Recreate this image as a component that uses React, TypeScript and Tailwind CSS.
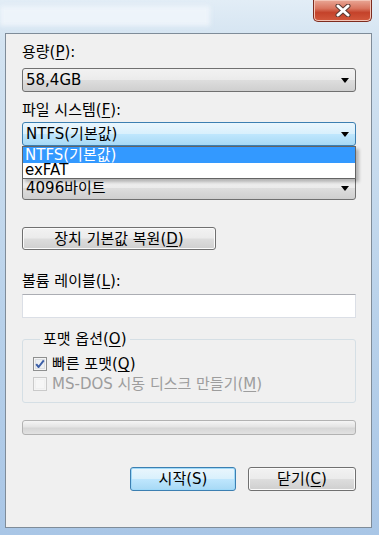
import React from "react";

const U = ({ children }: { children: React.ReactNode }) => (
  <span className="underline underline-offset-[2px] decoration-1">{children}</span>
);

function Arrow() {
  return (
    <svg width="8" height="5" viewBox="0 0 8 5" className="shrink-0">
      <path d="M0 0H8L4 5Z" fill="#000" />
    </svg>
  );
}

function Combo({ value, focused = false }: { value: string; focused?: boolean }) {
  const skin = focused
    ? "border-[#3c7fb1] bg-[linear-gradient(180deg,#eaf6fd_0%,#d9f0fc_48%,#bee6fd_52%,#a7d9f5_100%)]"
    : "border-[#707070] bg-[linear-gradient(180deg,#f2f2f2_0%,#ebebeb_48%,#dddddd_52%,#cfcfcf_100%)]";
  return (
    <div className={`h-[24px] rounded-[3px] border flex items-center justify-between pl-[3px] pr-[6px] ${skin}`}>
      <span className="leading-[18px]">{value}</span>
      <Arrow />
    </div>
  );
}

function Button({ children, primary = false, className = "" }: { children: React.ReactNode; primary?: boolean; className?: string }) {
  const skin = primary
    ? "border-[#3c7fb1] bg-[linear-gradient(180deg,#eaf6fd_0%,#d9f0fc_48%,#bee6fd_52%,#a7d9f5_100%)] shadow-[0_0_0_1px_#9fd9f8_inset]"
    : "border-[#707070] bg-[linear-gradient(180deg,#f2f2f2_0%,#ebebeb_48%,#dddddd_52%,#cfcfcf_100%)] shadow-[0_0_0_1px_#fbfbfb_inset]";
  return (
    <div className={`rounded-[3px] border flex items-center justify-center leading-[18px] ${skin} ${className}`}>
      {children}
    </div>
  );
}

function CheckBox({ checked, disabled }: { checked?: boolean; disabled?: boolean }) {
  return (
    <svg width="14" height="14" viewBox="0 0 14 14" className="shrink-0">
      <rect x="0.5" y="0.5" width="13" height="13" fill="#f4f4f4" stroke={disabled ? "#cacaca" : "#8e8f8f"} />
      <rect x="2" y="2" width="10" height="10" fill={disabled ? "#f0f0f0" : "#dcdfe3"} />
      <rect x="3" y="3" width="8" height="8" fill={disabled ? "#f6f6f6" : "#eef0f2"} />
      {checked && (
        <path d="M3.2 7.2 L5.6 10 L10.8 3.4" fill="none" stroke="#3b5ea7" strokeWidth="2" strokeLinejoin="round" />
      )}
    </svg>
  );
}

export default function App() {
  return (
    <div className="w-[379px] h-[535px] overflow-hidden text-[15px] text-black font-['DejaVu_Sans','Noto_Sans_CJK_KR',sans-serif] bg-[linear-gradient(180deg,#e2edf6_0%,#d3e3f1_8%,#b8d1ea_60%,#a9c6e6_100%)]">
      {/* title bar */}
      <div className="h-[33px] flex justify-between">
        <div className="mt-[6px] w-[210px] h-[20px] bg-[#f1f6fb]/80 blur-[2px]" />
        <div className="mr-[7px] w-[59px] h-[22px] rounded-b-[5px] border border-t-0 border-[#7d2c1f] bg-[linear-gradient(180deg,#e9a796_0%,#d9755f_40%,#c4422a_60%,#d3593d_100%)] shadow-[0_0_0_1px_#f3c4b6_inset] flex items-center justify-center">
          <svg width="16" height="13" viewBox="0 0 16 13">
            <path d="M3 2L13 11M13 2L3 11" stroke="#5a3a33" strokeWidth="5" strokeLinecap="round" />
            <path d="M3 2L13 11M13 2L3 11" stroke="#ffffff" strokeWidth="3" strokeLinecap="round" />
          </svg>
        </div>
      </div>

      {/* client area */}
      <div className="ml-[5px] w-[367px] h-[495px] bg-[#f0f0f0] border border-[#7f8c99]">
        <div className="pl-[16px] pr-[15px] pt-[9px]">
          <div className="h-[18px] leading-[18px]">
            용량(<U>P</U>):
          </div>
          <div className="mt-[7px]">
            <Combo value="58,4GB" />
          </div>

          <div className="mt-[9px] h-[18px] leading-[18px]">
            파일 시스템(<U>F</U>):
          </div>
          <div className="mt-[3px] relative z-10">
            <Combo value="NTFS(기본값)" focused />
            <div className="absolute top-full left-0 w-full border border-[#646464] bg-white shadow-[3px_3px_3px_rgba(0,0,0,0.25)]">
              <div className="h-[16px] leading-[16px] pl-[2px] bg-[#3399ff] text-white">NTFS(기본값)</div>
              <div className="h-[15px] leading-[15px] pl-[2px]">exFAT</div>
            </div>
          </div>

          {/* allocation-size label sits under the open list */}
          <div className="mt-[9px] h-[18px]" />
          <div className="mt-[3px]">
            <Combo value="4096바이트" />
          </div>

          <Button className="mt-[27px] w-[194px] h-[23px]">
            장치 기본값 복원(<U>D</U>)
          </Button>

          <div className="mt-[22px] h-[18px] leading-[18px]">
            볼륨 레이블(<U>L</U>):
          </div>
          <div className="mt-[4px] h-[24px] bg-white border border-[#dbdfe6] border-t-[#abadb3]" />

          <fieldset className="mt-[12px] rounded-[3px] border border-[#d5dfe5] pl-[10px] pb-[9px]">
            <legend className="ml-[7px] px-[3px] leading-[18px]">
              포맷 옵션(<U>O</U>)
            </legend>
            <div className="mt-[7px] h-[18px] flex items-center gap-[5px] leading-[18px]">
              <CheckBox checked />
              <span>
                빠른 포맷(<U>Q</U>)
              </span>
            </div>
            <div className="mt-[2px] h-[18px] flex items-center gap-[5px] leading-[18px] text-[#9d9d9d]">
              <CheckBox disabled />
              <span>
                MS-DOS 시동 디스크 만들기(<U>M</U>)
              </span>
            </div>
          </fieldset>

          <div className="mt-[17px] h-[15px] rounded-[3px] border border-[#b2b2b2] bg-[linear-gradient(180deg,#f5f5f5_0%,#e4e4e4_45%,#d6d6d6_55%,#e2e2e2_100%)]" />

          <div className="mt-[32px] flex justify-end gap-[12px]">
            <Button primary className="w-[106px] h-[24px]">
              시작(S)
            </Button>
            <Button className="w-[108px] h-[24px]">
              닫기(<U>C</U>)
            </Button>
          </div>
        </div>
      </div>
    </div>
  );
}
